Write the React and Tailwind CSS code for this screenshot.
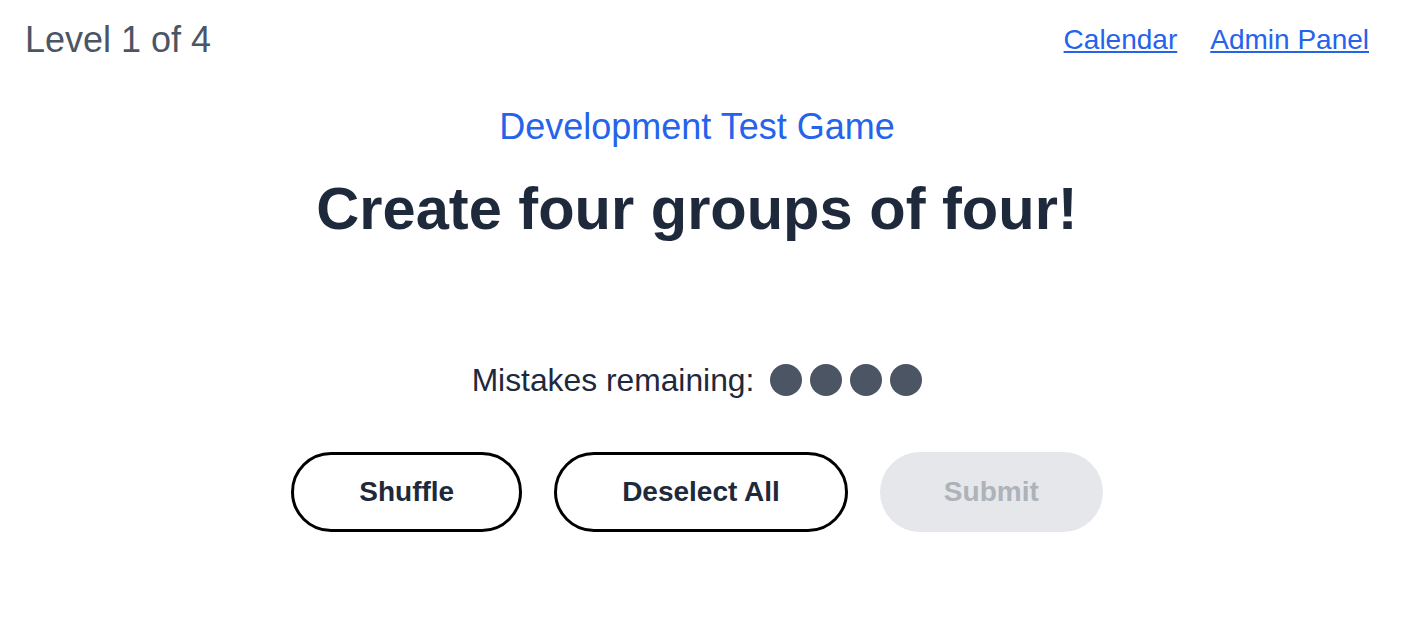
export default function App() {
  const font = { fontFamily: '"Liberation Sans", Arial, sans-serif' };
  return (
    <div className="min-h-[638px] w-full bg-white" style={font}>
      <header className="flex items-start justify-between pl-[25px] pr-[43px] pt-[20px]">
        <div className="text-[36px] leading-[40px] text-[#4b5563]">Level 1 of 4</div>
        <nav className="flex items-start gap-[33px] text-[28px] leading-[40px] text-[#2563eb]">
          <a href="#" className="underline">Calendar</a>
          <a href="#" className="underline">Admin Panel</a>
        </nav>
      </header>
      <main className="flex flex-col items-center pr-[18px]">
        <div className="mt-[47px] text-[36px] leading-[40px] text-[#2563eb]">Development Test Game</div>
        <h1 className="mt-[30px] text-[59.6px] font-bold leading-[64px] text-[#1e293b]">Create four groups of four!</h1>
        <div className="mt-[119px] flex items-start gap-[16px]">
          <span className="text-[31.8px] leading-[40px] text-[#1e293b]">Mistakes remaining:</span>
          <div className="mt-[4px] flex gap-2">
            <span className="h-8 w-8 rounded-full bg-[#4b5563]" />
            <span className="h-8 w-8 rounded-full bg-[#4b5563]" />
            <span className="h-8 w-8 rounded-full bg-[#4b5563]" />
            <span className="h-8 w-8 rounded-full bg-[#4b5563]" />
          </div>
        </div>
        <div className="mt-[52px] flex items-center gap-8">
          <button className="h-[80px] rounded-full border-[3px] border-black bg-white px-[65px] text-[28px] font-bold text-[#1e293b]">Shuffle</button>
          <button className="h-[80px] rounded-full border-[3px] border-black bg-white px-[65px] text-[28px] font-bold text-[#1e293b]">Deselect All</button>
          <button className="h-[80px] rounded-full bg-[#e5e7eb] px-[64px] text-[28px] font-bold text-[#aeb2b9]">Submit</button>
        </div>
      </main>
    </div>
  );
}
